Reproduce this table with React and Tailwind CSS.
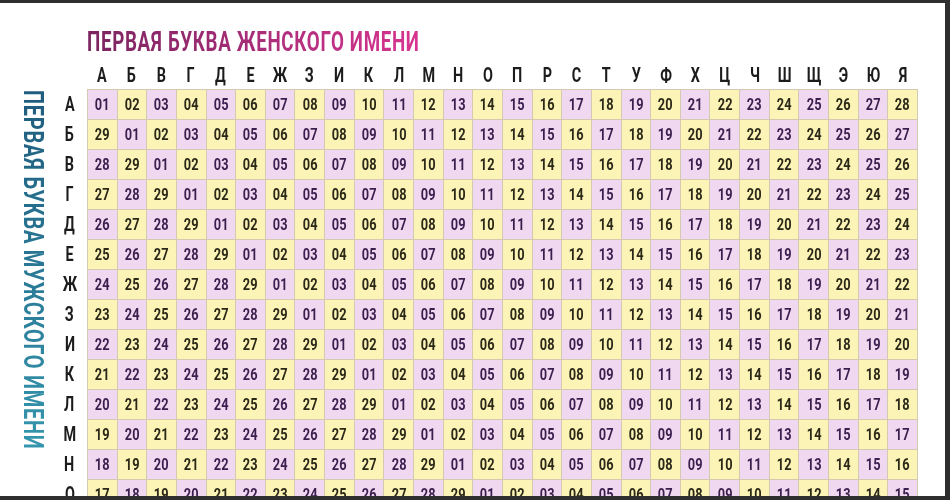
import React from "react";

const COLS = "АБВГДЕЖЗИКЛМНОПРСТУФХЦЧШЩЭЮЯ".split("");
const ROWS = "АБВГДЕЖЗИКЛМНО".split("");

function pad(n) {
  return n < 10 ? "0" + n : String(n);
}

export default function App() {
  return (
    <div
      className="w-[950px] h-[500px] overflow-hidden bg-white border-t-[3px] border-r-[5px] border-b-[4px] border-[#2e2e2e] pt-[25px]"
      style={{ fontFamily: "Roboto, 'Liberation Sans', sans-serif" }}
    >
      {/* title */}
      <div className="pl-[87px] h-[28px] leading-[28px] whitespace-nowrap">
        <span className="inline-block origin-left scale-x-[0.67] text-[28px] font-bold tracking-[1px] bg-linear-to-r from-[#7a2460] to-[#d83490] bg-clip-text text-transparent">
          ПЕРВАЯ БУКВА ЖЕНСКОГО ИМЕНИ
        </span>
      </div>

      {/* header letters */}
      <div className="mt-[9px] pl-[87px]">
        <div className="w-[831px] grid grid-cols-[repeat(28,minmax(0,1fr))] h-[20px]">
          {COLS.map((c) => (
            <div
              key={c}
              className="text-center text-[20px] leading-[20px] font-bold text-[#1c1c1c]"
            >
              <span className="inline-block scale-x-[0.72]">{c}</span>
            </div>
          ))}
        </div>
      </div>

      {/* body */}
      <div className="mt-[4px] flex items-start">
        <div className="w-[52px] pl-[19px]">
          <div className="w-[28px] pt-[1px] [writing-mode:vertical-rl] text-[28px] leading-[28px] font-bold whitespace-nowrap">
            <span className="inline-block origin-top scale-y-[0.715] tracking-[1px] bg-linear-to-b from-[#1f5c7e] to-[#3596ad] bg-clip-text text-transparent">
              ПЕРВАЯ БУКВА МУЖСКОГО ИМЕНИ
            </span>
          </div>
        </div>
        <div className="w-[35px] flex flex-col">
          {ROWS.map((r) => (
            <div
              key={r}
              className="h-[30px] flex items-center justify-center text-[20px] font-bold text-[#1c1c1c]"
            >
              <span className="inline-block scale-x-[0.72]">{r}</span>
            </div>
          ))}
        </div>
        <div className="w-[831px] grid grid-cols-[repeat(28,minmax(0,1fr))] content-start border-l border-t border-[#d4cab2]">
          {ROWS.map((r, i) =>
            COLS.map((c, j) => {
              const v = (((j - i) % 29) + 29) % 29 + 1;
              const pink = (i + j) % 2 === 0;
              return (
                <div
                  key={r + c}
                  className={
                    "h-[30px] flex items-center justify-center border-r border-b border-[#d4cab2] text-[16px] font-bold " +
                    (pink
                      ? "bg-[#f1d8f1] text-[#3a1f4e]"
                      : "bg-[#fbf4b6] text-[#2b2818]")
                  }
                >
                  <span className="inline-block scale-x-[0.8]">{pad(v)}</span>
                </div>
              );
            })
          )}
        </div>
      </div>
    </div>
  );
}
